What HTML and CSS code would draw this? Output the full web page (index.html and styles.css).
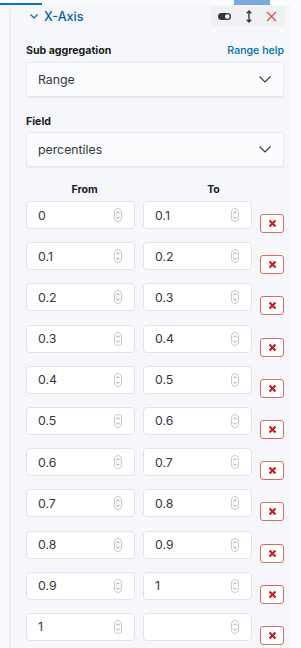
FILE: index.html
```html
<!DOCTYPE html>
<html lang="en">
<head>
    <meta charset="UTF-8">
    <title>X-Axis ranges</title>
    <link rel="stylesheet" href="styles.css">
</head>
<body>
    <div class="topbar">
        <div class="tab-line"></div>
        <div class="tab-block"></div>
    </div>
    <div class="layout">
        <div class="gutter"></div>
        <div class="panel">
            <div class="panel-header">
                <div class="title">
                    <svg class="chevron" width="8" height="5" viewBox="0 0 8 5"><path d="M0.5 0.5 L4 4 L7.5 0.5" fill="none" stroke="#0061a6" stroke-width="1.1"/></svg>
                    <span>X-Axis</span>
                </div>
                <div class="actions">
                    <svg width="13" height="7" viewBox="0 0 13 7"><rect x="0" y="0" width="13" height="7" rx="3.5" fill="#343741"/><circle cx="9.3" cy="3.5" r="2.3" fill="#fff"/></svg>
                    <svg width="6" height="13" viewBox="0 0 6 13"><path d="M3 1 V12 M0.8 3.2 L3 1 L5.2 3.2 M0.8 9.8 L3 12 L5.2 9.8" fill="none" stroke="#343741" stroke-width="1.4"/></svg>
                    <svg width="11" height="11" viewBox="0 0 11 11"><path d="M1 1 L10 10 M10 1 L1 10" stroke="#e0504a" stroke-width="1.3"/></svg>
                </div>
            </div>

            <div class="field-label">
                <span>Sub aggregation</span>
                <a href="#" class="help">Range help</a>
            </div>
            <div class="select">
                <span>Range</span>
                <svg width="12" height="7" viewBox="0 0 12 7"><path d="M0.5 0.5 L6 6 L11.5 0.5" fill="none" stroke="#343741" stroke-width="1.1"/></svg>
            </div>

            <div class="field-label field-gap">
                <span>Field</span>
            </div>
            <div class="select">
                <span>percentiles</span>
                <svg width="12" height="7" viewBox="0 0 12 7"><path d="M0.5 0.5 L6 6 L11.5 0.5" fill="none" stroke="#343741" stroke-width="1.1"/></svg>
            </div>

            <div class="range-head">
                <span class="head-from">From</span>
                <span class="head-to">To</span>
            </div>
            <div class="ranges" id="ranges"></div>
        </div>
    </div>

    <script>
        const rows = [
            ['0', '0.1'], ['0.1', '0.2'], ['0.2', '0.3'], ['0.3', '0.4'],
            ['0.4', '0.5'], ['0.5', '0.6'], ['0.6', '0.7'], ['0.7', '0.8'],
            ['0.8', '0.9'], ['0.9', '1'], ['1', '']
        ];
        const spinner = '<svg class="spin" width="8" height="14" viewBox="0 0 8 14"><rect x="0.5" y="0.5" width="7" height="13" rx="3.5" fill="none" stroke="#c4c9d2"/><path d="M2.3 5.3 L4 3.6 L5.7 5.3 M2.3 8.7 L4 10.4 L5.7 8.7" fill="none" stroke="#8a8f99" stroke-width="0.9"/></svg>';
        const cross = '<svg width="9" height="9" viewBox="0 0 9 9"><path d="M1.5 1.5 L7.5 7.5 M7.5 1.5 L1.5 7.5" stroke="#c81e1e" stroke-width="2.2"/></svg>';
        const list = document.getElementById('ranges');
        for (let r of rows) {
            const row = document.createElement('div');
            row.className = 'range-row';
            row.innerHTML =
                '<div class="num"><span>' + r[0] + '</span>' + spinner + '</div>' +
                '<div class="num"><span>' + r[1] + '</span>' + spinner + '</div>' +
                '<button class="remove">' + cross + '</button>';
            list.appendChild(row);
        }
    </script>
</body>
</html>
```

FILE: styles.css
```css
body {
    margin: 0;
    font-family: 'Inter', 'Noto Sans', sans-serif;
    background-color: #fbfcfd;
    color: #343741;
}
.topbar {
    display: flex;
    justify-content: space-between;
    height: 5px;
}
.tab-line {
    width: 42px;
    height: 2px;
    margin-top: 3px;
    background-color: #0077cc;
}
.tab-block {
    width: 36px;
    height: 5px;
    margin-right: 31px;
    background-color: #79aad9;
}
.layout {
    display: flex;
}
.gutter {
    width: 9px;
    border-right: 2px solid #eef0f4;
    background-color: #f8f9fb;
}
.panel {
    width: 280px;
    padding: 1px 7px 10px 15px;
    box-sizing: border-box;
    background-color: #f5f7fa;
    min-height: 643px;
}
.panel-header {
    display: flex;
    justify-content: space-between;
    align-items: center;
    height: 20px;
}
.title {
    display: flex;
    align-items: center;
    gap: 6px;
    padding-left: 4px;
    color: #0061a6;
    font-size: 12.5px;
    font-weight: 500;
}
.actions {
    display: flex;
    align-items: center;
    height: 20px;
    width: 74px;
    padding: 0 8px 0 7px;
    box-sizing: border-box;
    justify-content: space-between;
    background-color: #eff1f4;
    border-radius: 3px;
    margin-right: -1px;
}
.field-label {
    display: flex;
    justify-content: space-between;
    align-items: baseline;
    margin-top: 18px;
    margin-bottom: 5px;
    font-size: 10.6px;
    font-weight: 700;
    color: #1a1c21;
}
.field-gap {
    margin-top: 18px;
    margin-bottom: 4px;
}
.help {
    color: #006bb8;
    font-weight: 500;
    text-decoration: none;
}
.select {
    display: flex;
    justify-content: space-between;
    align-items: center;
    height: 35px;
    padding: 0 12px 0 11px;
    box-sizing: border-box;
    background-color: #fbfcfd;
    border: 1px solid #e6e9ef;
    border-radius: 2px;
    box-shadow: 0 1px 1px rgba(0, 0, 0, 0.05);
    font-size: 12.3px;
}
.range-head {
    display: flex;
    margin-top: 16px;
    font-size: 10.6px;
    font-weight: 700;
    color: #1a1c21;
}
.head-from {
    width: 117px;
    text-align: center;
}
.head-to {
    flex: 1;
    text-align: center;
}
.ranges {
    display: flex;
    flex-direction: column;
    gap: 9.2px;
    margin-top: 5px;
}
.range-row {
    display: flex;
    gap: 8px;
    height: 32px;
}
.num {
    display: flex;
    justify-content: space-between;
    align-items: center;
    width: 109px;
    height: 28px;
    padding: 0 12px 0 11px;
    box-sizing: border-box;
    background-color: #fff;
    border: 1px solid #e0e4ea;
    border-radius: 4px;
    font-size: 12.3px;
}
.remove {
    display: flex;
    justify-content: center;
    align-items: center;
    width: 24px;
    height: 19px;
    margin-top: 13px;
    padding: 0;
    background-color: #fff;
    border: 1px solid #d96a66;
    border-radius: 3px;
}
```
